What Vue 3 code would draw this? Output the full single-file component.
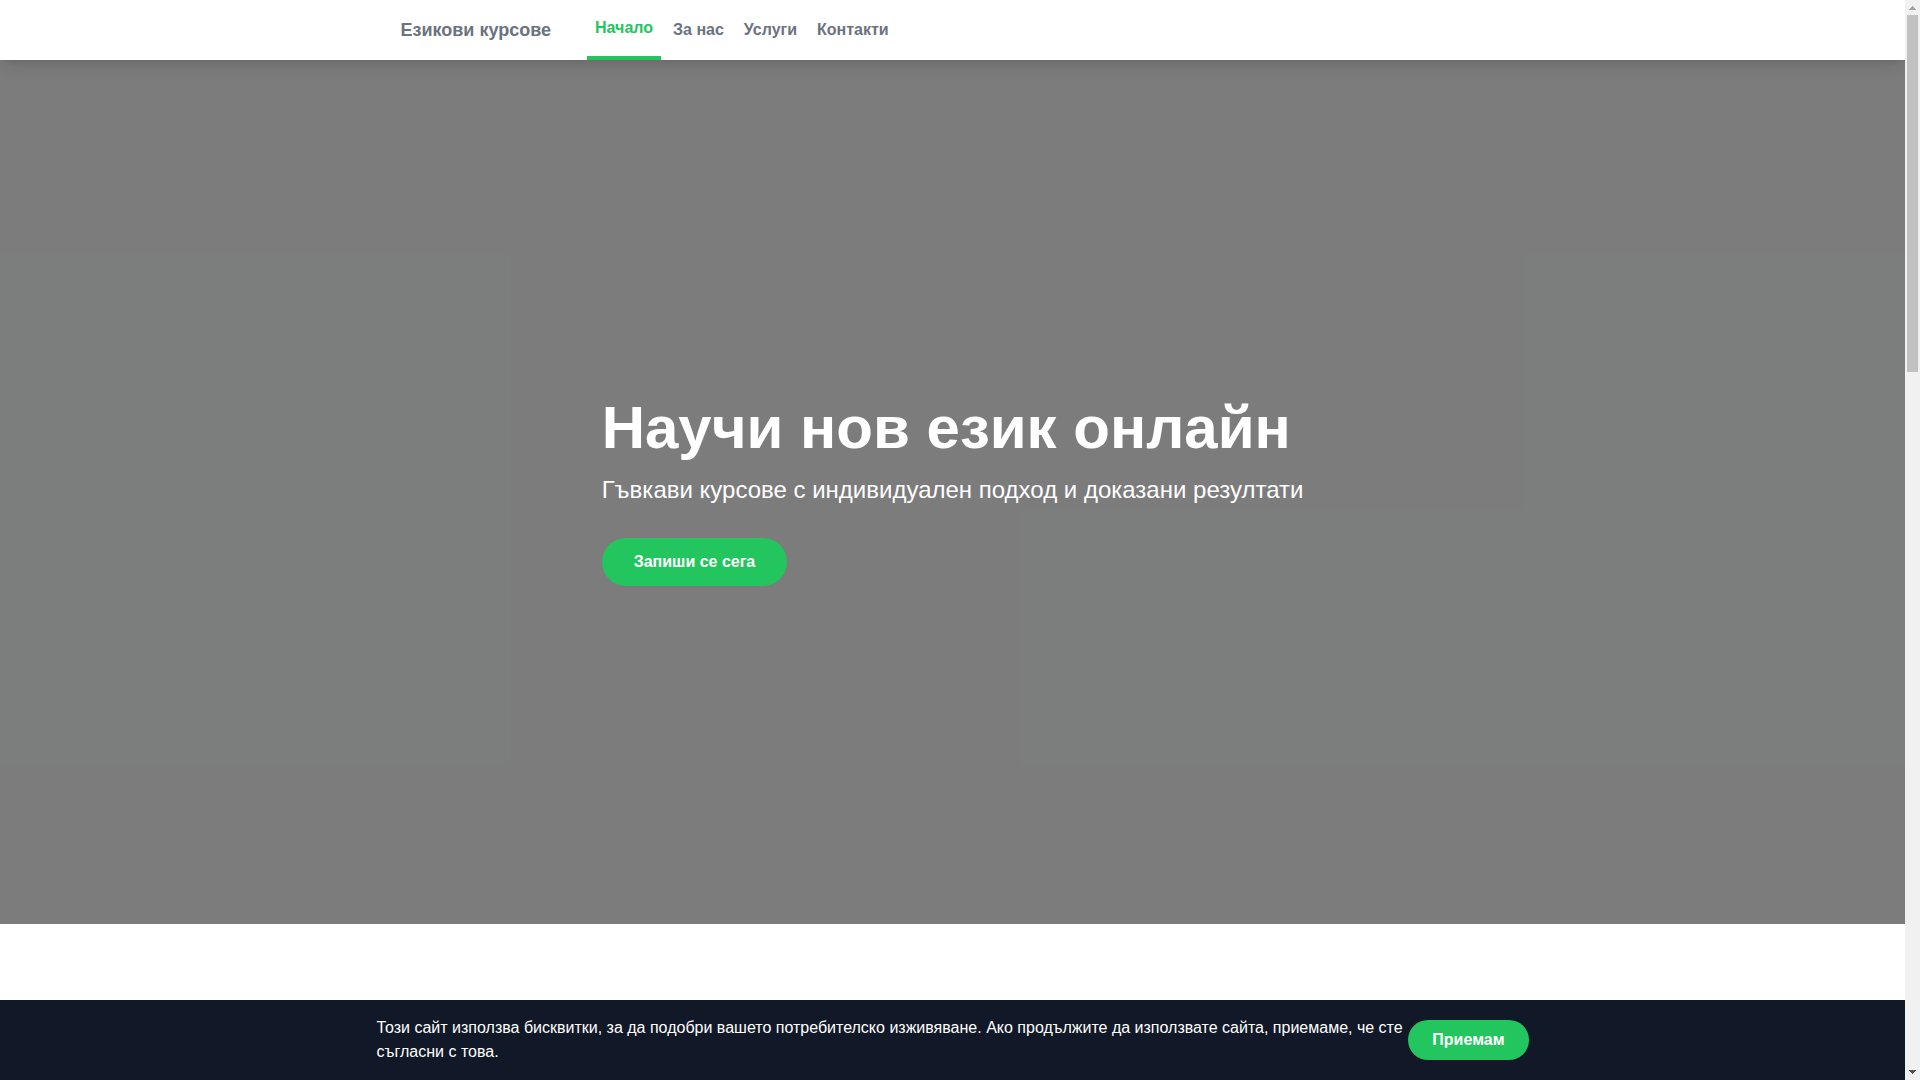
<template>
  <div class="window">
    <div class="page">
      <header class="navbar">
        <nav class="container nav-inner">
          <a href="#" class="brand">Езикови курсове</a>
          <div class="nav-links">
            <a
              v-for="link in links"
              :key="link.href"
              :href="link.href"
              class="nav-link"
              :class="{ active: link.href === activeLink }"
              @click="activeLink = link.href"
            >{{ link.label }}</a>
          </div>
        </nav>
      </header>

      <main class="content">
        <section class="hero">
          <div class="hero-text">
            <h1>Научи нов език онлайн</h1>
            <p>Гъвкави курсове с индивидуален подход и доказани резултати</p>
            <a href="#contact" class="button hero-button">Запиши се сега</a>
          </div>
        </section>
      </main>

      <div v-if="showCookies" class="cookie-bar">
        <div class="container cookie-inner">
          <p>
            Този сайт използва бисквитки, за да подобри вашето потребителско изживяване. Ако
            продължите да използвате сайта, приемаме, че сте съгласни с това.
          </p>
          <button type="button" class="button cookie-button" @click="showCookies = false">
            Приемам
          </button>
        </div>
      </div>
    </div>

    <div class="scrollbar" aria-hidden="true">
      <svg class="arrow" viewBox="0 0 15 15" shape-rendering="crispEdges">
        <path d="M7 6h1v1h1v1h1v1h1v1H4V9h1V8h1V7h1z" fill="#a3a3a3" />
      </svg>
      <div class="track">
        <div class="thumb"></div>
      </div>
      <svg class="arrow" viewBox="0 0 15 15" shape-rendering="crispEdges">
        <path d="M4 5h7v1h-1v1H9v1H8v1H7V8H6V7H5V6H4z" fill="#505050" />
      </svg>
    </div>
  </div>
</template>

<script setup>
import { ref } from 'vue';

const links = [
  { label: 'Начало', href: '#home' },
  { label: 'За нас', href: '#about' },
  { label: 'Услуги', href: '#services' },
  { label: 'Контакти', href: '#contact' },
];

const activeLink = ref('#home');
const showCookies = ref(true);
</script>

<style>
body {
  margin: 0;
}
</style>

<style scoped>
* {
  box-sizing: border-box;
}

.window {
  display: flex;
  height: 100vh;
  font-family: 'Liberation Sans', Arial, sans-serif;
  font-size: 16px;
  line-height: 24px;
  background-color: #fff;
}

.page {
  display: flex;
  flex: 1;
  flex-direction: column;
  min-width: 0;
  overflow: hidden;
}

.container {
  width: 100%;
  max-width: 1152px;
  margin: 0 auto;
}

a {
  text-decoration: none;
}

.navbar {
  position: relative;
  z-index: 1;
  background-color: #fff;
  box-shadow: 0 10px 15px -3px rgba(0, 0, 0, 0.1), 0 4px 6px -4px rgba(0, 0, 0, 0.1);
}

.nav-inner {
  display: flex;
  align-items: center;
  gap: 36px;
  padding: 0 24px;
}

.brand {
  color: #6b7280;
  font-size: 18px;
  font-weight: 700;
  line-height: 28px;
}

.nav-links {
  display: flex;
  gap: 4px;
}

.nav-link {
  display: flex;
  align-items: center;
  height: 60px;
  padding: 0 8px;
  color: #6b7280;
  font-weight: 700;
}

.nav-link.active {
  border-bottom: 4px solid #22c55e;
  color: #22c55e;
}

.content {
  flex: 1;
  min-height: 0;
  overflow: hidden;
}

/* faint tinted blocks over the grey backdrop */
.hero {
  display: flex;
  align-items: center;
  justify-content: center;
  height: 80vh;
  background-color: #7c7c7c;
  background-image:
    linear-gradient(#7b7e7c, #7b7e7c),
    linear-gradient(#7b7e7c, #7b7e7c),
    linear-gradient(#7b7e7c, #7b7e7c);
  background-position: 0 194px, right 194px, right 450px;
  background-size: 510px 512px, 381px 256px, 886px 256px;
  background-repeat: no-repeat;
}

.hero-text {
  color: #fff;
}

h1 {
  margin: 0 0 16px;
  font-size: 60px;
  font-weight: 700;
  line-height: 60px;
}

.hero-text p {
  margin: 0 0 32px;
  font-size: 24px;
  line-height: 32px;
}

.button {
  display: inline-block;
  flex-shrink: 0;
  border: none;
  border-radius: 9999px;
  background-color: #22c55e;
  color: #fff;
  font-family: inherit;
  font-size: 16px;
  font-weight: 700;
  line-height: 24px;
  cursor: pointer;
}

.hero-button {
  padding: 12px 32px;
  vertical-align: top;
}

.cookie-bar {
  padding: 16px 0;
  background-color: #111827;
  color: #fff;
}

.cookie-inner {
  display: flex;
  align-items: center;
  justify-content: space-between;
}

.cookie-inner p {
  margin: 0;
}

.cookie-button {
  padding: 8px 24px;
}

.scrollbar {
  display: flex;
  flex-direction: column;
  flex-shrink: 0;
  width: 15px;
  background-color: #f1f1f1;
}

.arrow {
  width: 15px;
  height: 15px;
}

.track {
  flex: 1;
  padding: 0 2px;
}

.thumb {
  height: 34%;
  background-color: #c1c1c1;
}
</style>
